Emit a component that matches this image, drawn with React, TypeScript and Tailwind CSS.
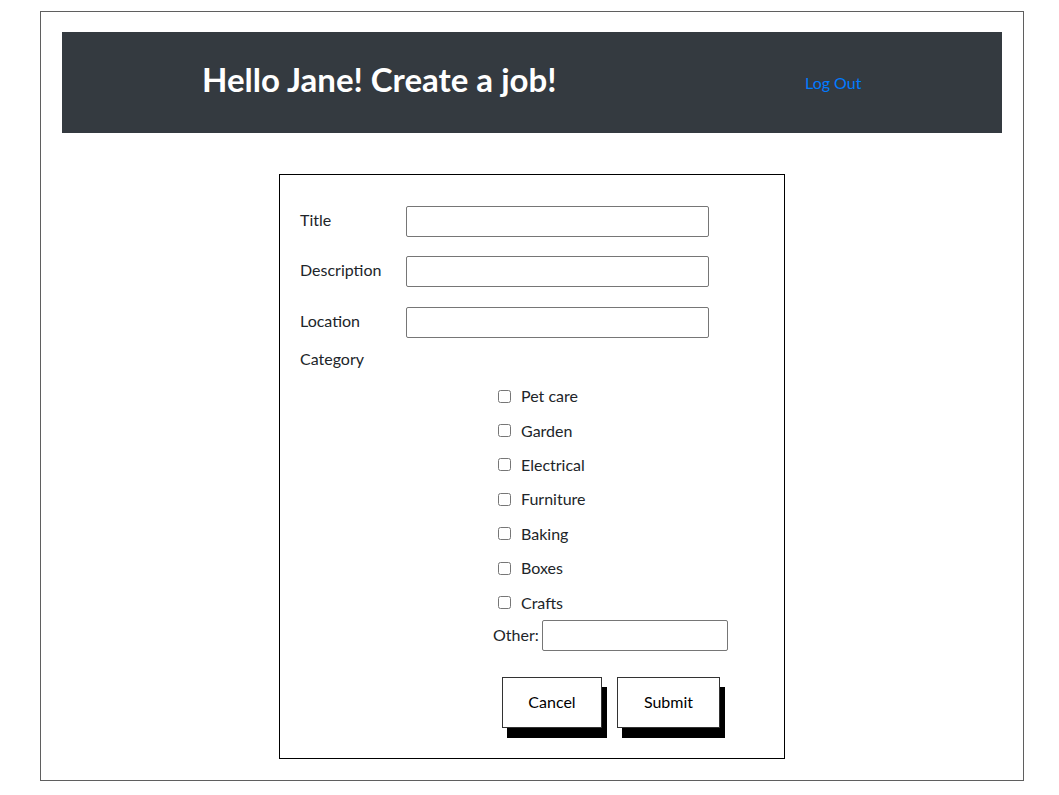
const CATEGORIES = ["Pet care", "Garden", "Electrical", "Furniture", "Baking", "Boxes", "Crafts"];

function Field({ label, className }: { label: string; className?: string }) {
  return (
    <div className={`flex h-[31px] items-center ${className ?? ""}`}>
      <label className="w-[106px] pb-[3px] text-[16px]">{label}</label>
      <input
        type="text"
        className="h-[31px] w-[303px] rounded-[2px] border border-[#767676] bg-white px-1 outline-none"
      />
    </div>
  );
}

export default function App() {
  return (
    <div className="min-h-[795px] bg-white pt-[11px] font-['Lato',sans-serif] text-[#212529]">
      <div className="ml-[40px] h-[770px] w-[984px] border border-[#5f5f5f] px-[21px] pt-[20px]">
        {/* Header */}
        <div className="flex h-[101px] items-center bg-[#343a40]">
          <div className="w-[743px] pb-[5px] pl-[140px]">
            <h1 className="text-[33px] font-bold leading-tight text-white">
              Hello Jane! Create a job!
            </h1>
          </div>
          <a href="#" className="text-[16px] text-[#007bff]">
            Log Out
          </a>
        </div>

        {/* Form */}
        <form className="mx-auto mt-[41px] h-[585px] w-[506px] border border-black px-[20px] pt-[31px]">
          <Field label="Title" className="mb-[19px]" />
          <Field label="Description" className="mb-[20px]" />
          <Field label="Location" />
          <div className="mt-[9px] text-[16px] leading-6">Category</div>

          <div className="mt-[8px] ml-[198px] flex flex-col">
            {CATEGORIES.map((c) => (
              <label key={c} className="flex h-[34.4px] items-center gap-[10px] text-[16px]">
                <input type="checkbox" className="m-0 h-[13px] w-[13px]" />
                {c}
              </label>
            ))}
          </div>

          <div className="ml-[193px] flex h-[31px] items-center gap-[3px]">
            <label className="text-[16px]">Other:</label>
            <input
              type="text"
              className="h-[31px] w-[186px] rounded-[2px] border border-[#767676] bg-white px-1 outline-none"
            />
          </div>

          <div className="mt-[26px] ml-[202px] flex gap-[15px]">
            <button
              type="button"
              className="h-[51px] w-[100px] border border-[#333] bg-white text-[16px] text-black shadow-[5px_10px_0_#000]"
            >
              Cancel
            </button>
            <button
              type="button"
              className="h-[51px] w-[103px] border border-[#333] bg-white text-[16px] text-black shadow-[5px_10px_0_#000]"
            >
              Submit
            </button>
          </div>
        </form>
      </div>
    </div>
  );
}
